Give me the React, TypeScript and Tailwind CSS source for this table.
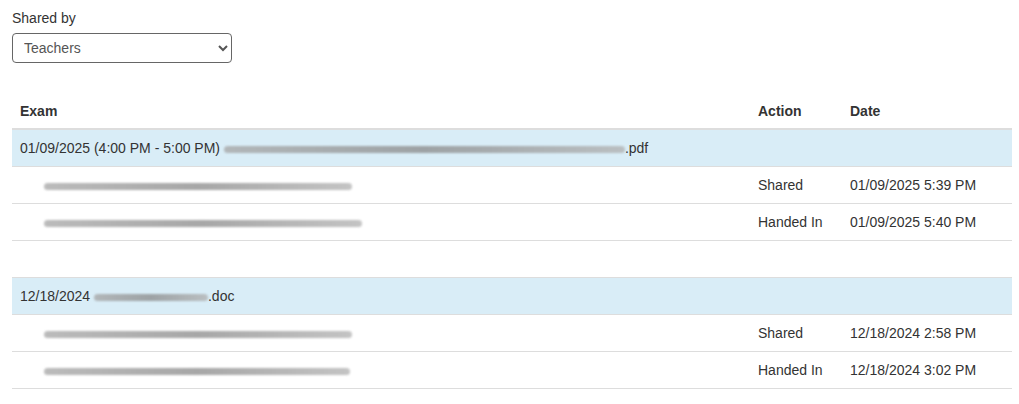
import React from "react";

type Entry = { indent: number; blur: number; action: string; date: string };
type Group = { label: string; hiddenWidth: number; ext: string; entries: Entry[] };

const groups: Group[] = [
  {
    label: "01/09/2025 (4:00 PM - 5:00 PM)",
    hiddenWidth: 401,
    ext: ".pdf",
    entries: [
      { indent: 24, blur: 308, action: "Shared", date: "01/09/2025 5:39 PM" },
      { indent: 24, blur: 318, action: "Handed In", date: "01/09/2025 5:40 PM" },
    ],
  },
  {
    label: "12/18/2024",
    hiddenWidth: 114,
    ext: ".doc",
    entries: [
      { indent: 24, blur: 308, action: "Shared", date: "12/18/2024 2:58 PM" },
      { indent: 24, blur: 306, action: "Handed In", date: "12/18/2024 3:02 PM" },
    ],
  },
];

// redacted text in the screenshot: a smeared grey streak
function Redacted({ width }: { width: number }) {
  return (
    <span
      className="inline-block h-[7px] align-middle rounded-sm bg-gradient-to-r from-[#a5a5a5] via-[#8a8a8a] to-[#b0b0b0] blur-[0.8px] opacity-75"
      style={{ width }}
    />
  );
}

export default function App() {
  return (
    <div className="bg-white px-3 pt-2 text-[14px] leading-5 text-[#333] font-['Liberation_Sans',Arial,sans-serif]">
      <label className="block mb-[5px]">Shared by</label>
      <select
        defaultValue="Teachers"
        className="w-[220px] h-[30px] rounded-[4px] border border-[#666] bg-white pl-[7px] pr-2 text-[14px] text-[#555]"
      >
        <option>Teachers</option>
        <option>Students</option>
      </select>

      <table className="mt-[29px] w-[1000px] border-collapse">
        <thead>
          <tr>
            <th className="w-[738px] border-b-2 border-[#ddd] px-2 pt-[9px] pb-[7px] text-left font-bold">Exam</th>
            <th className="w-[92px] border-b-2 border-[#ddd] px-2 pt-[9px] pb-[7px] text-left font-bold">Action</th>
            <th className="border-b-2 border-[#ddd] px-2 pt-[9px] pb-[7px] text-left font-bold">Date</th>
          </tr>
        </thead>
        {groups.map((g, gi) => (
          <tbody key={g.label}>
            {gi > 0 && (
              <tr>
                <td colSpan={3} className="h-[37px] border-t border-[#ddd] p-2" />
              </tr>
            )}
            <tr className="bg-[#d9edf7]">
              <td className="border-t border-[#ddd] p-2">
                {g.label} <Redacted width={g.hiddenWidth} />
                {g.ext}
              </td>
              <td className="border-t border-[#ddd] p-2" />
              <td className="border-t border-[#ddd] p-2" />
            </tr>
            {g.entries.map((e, i) => (
              <tr key={i}>
                <td className="border-t border-[#ddd] p-2" style={{ paddingLeft: 8 + e.indent }}>
                  <Redacted width={e.blur} />
                </td>
                <td className="border-t border-[#ddd] p-2">{e.action}</td>
                <td className="border-t border-[#ddd] p-2">{e.date}</td>
              </tr>
            ))}
          </tbody>
        ))}
        <tfoot>
          <tr>
            <td colSpan={3} className="border-t border-[#ddd]" />
          </tr>
        </tfoot>
      </table>
    </div>
  );
}
